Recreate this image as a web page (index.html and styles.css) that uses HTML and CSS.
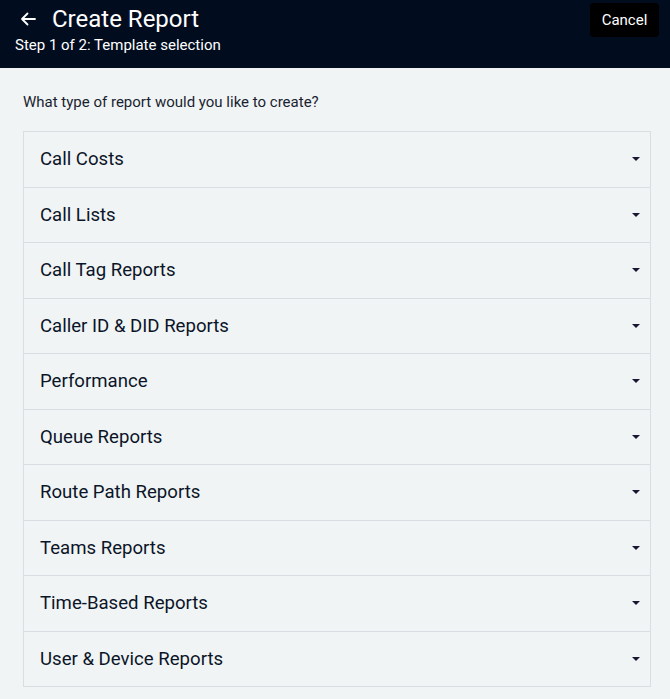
FILE: index.html
```html
<!DOCTYPE html>
<html lang="en">
<head>
    <meta charset="UTF-8">
    <meta name="viewport" content="width=device-width, initial-scale=1.0">
    <title>Create Report</title>
    <link rel="stylesheet" href="styles.css">
</head>
<body>
    <header class="topbar">
        <div class="topbar-text">
            <h1 class="title">
                <svg class="back-icon" width="16" height="14" viewBox="0 0 16 14" aria-hidden="true">
                    <path d="M15 7H2M7.5 1.5L2 7l5.5 5.5" fill="none" stroke="#fff" stroke-width="1.8" stroke-linecap="round" stroke-linejoin="round"/>
                </svg>
                Create Report
            </h1>
            <p class="step">Step 1 of 2: Template selection</p>
        </div>
        <button class="cancel-btn">Cancel</button>
    </header>

    <main class="content">
        <p class="question">What type of report would you like to create?</p>
        <ul class="report-list">
            <li class="report-item">Call Costs<span class="caret"></span></li>
            <li class="report-item">Call Lists<span class="caret"></span></li>
            <li class="report-item">Call Tag Reports<span class="caret"></span></li>
            <li class="report-item">Caller ID &amp; DID Reports<span class="caret"></span></li>
            <li class="report-item">Performance<span class="caret"></span></li>
            <li class="report-item">Queue Reports<span class="caret"></span></li>
            <li class="report-item">Route Path Reports<span class="caret"></span></li>
            <li class="report-item">Teams Reports<span class="caret"></span></li>
            <li class="report-item">Time-Based Reports<span class="caret"></span></li>
            <li class="report-item">User &amp; Device Reports<span class="caret"></span></li>
        </ul>
    </main>
</body>
</html>
```

FILE: styles.css
```css
body {
    margin: 0;
    font-family: Roboto, "Liberation Sans", Arial, sans-serif;
    background-color: #f0f4f5;
    color: #0c1428;
}
.topbar {
    display: flex;
    justify-content: space-between;
    align-items: flex-start;
    height: 68px;
    box-sizing: border-box;
    padding: 3px 11px 0 15px;
    background-color: #020c1f;
    color: white;
}
.topbar-text {
    padding-top: 2px;
}
.title {
    display: flex;
    align-items: center;
    gap: 16px;
    margin: 0 0 0 5px;
    font-size: 24px;
    font-weight: 400;
    line-height: 28px;
}
.back-icon {
    flex-shrink: 0;
}
.step {
    margin: 3px 0 0;
    font-size: 15px;
    line-height: 18px;
}
.cancel-btn {
    width: 69px;
    height: 34px;
    border: none;
    border-radius: 4px;
    background-color: #000;
    color: white;
    font-family: inherit;
    font-size: 15px;
    cursor: pointer;
}
.content {
    padding: 25px 19px 12px 23px;
}
.question {
    margin: 0 0 20px;
    font-size: 15px;
    line-height: 18px;
    color: #1a1f30;
}
.report-list {
    list-style: none;
    margin: 0;
    padding: 0;
    border: 1px solid #d9dee3;
}
.report-item {
    display: flex;
    justify-content: space-between;
    align-items: center;
    height: 54.5px;
    padding: 0 10px 0 16px;
    border-top: 1px solid #d9dee3;
    font-size: 18.6px;
    cursor: pointer;
}
.report-item:first-child {
    border-top: none;
}
.caret {
    width: 0;
    height: 0;
    border-left: 4px solid transparent;
    border-right: 4px solid transparent;
    border-top: 4px solid #1a1530;
}
```
